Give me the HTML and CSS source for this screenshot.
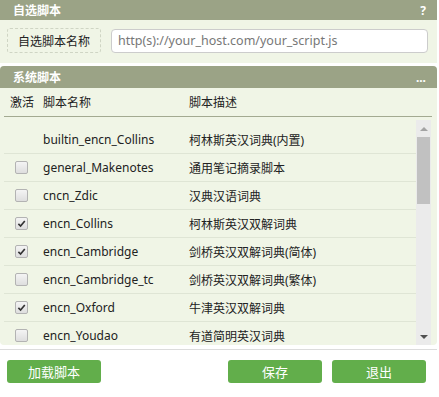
FILE: index.html
```html
<!DOCTYPE html>
<html lang="zh-CN">
<head>
<meta charset="UTF-8" />
<title>脚本管理</title>
<link rel="stylesheet" href="styles.css">
</head>
<body>

<div class="panel">
  <div class="panel-head">
    <span>自选脚本</span>
    <span class="head-tool">?</span>
  </div>
  <div class="custom-row">
    <span class="name-btn">自选脚本名称</span>
    <input class="url-input" type="text" placeholder="http(s)://your_host.com/your_script.js" />
  </div>
</div>

<div class="panel panel-sys">
  <div class="panel-head">
    <span>系统脚本</span>
    <span class="head-tool">...</span>
  </div>
  <div class="thead">
    <span class="c-check">激活</span>
    <span class="c-name">脚本名称</span>
    <span class="c-desc">脚本描述</span>
  </div>
  <div class="tbody">
    <div class="list">
      <div class="row">
        <span class="c-check"></span>
        <span class="c-name">builtin_encn_Collins</span>
        <span class="c-desc">柯林斯英汉词典(内置)</span>
      </div>
      <div class="row">
        <span class="c-check"><span class="box"></span></span>
        <span class="c-name">general_Makenotes</span>
        <span class="c-desc">通用笔记摘录脚本</span>
      </div>
      <div class="row">
        <span class="c-check"><span class="box"></span></span>
        <span class="c-name">cncn_Zdic</span>
        <span class="c-desc">汉典汉语词典</span>
      </div>
      <div class="row">
        <span class="c-check"><span class="box"><svg viewBox="0 0 12 12"><path d="M2.6 6.4 L5 8.8 L9.6 3.2" /></svg></span></span>
        <span class="c-name">encn_Collins</span>
        <span class="c-desc">柯林斯英汉双解词典</span>
      </div>
      <div class="row">
        <span class="c-check"><span class="box"><svg viewBox="0 0 12 12"><path d="M2.6 6.4 L5 8.8 L9.6 3.2" /></svg></span></span>
        <span class="c-name">encn_Cambridge</span>
        <span class="c-desc">剑桥英汉双解词典(简体)</span>
      </div>
      <div class="row">
        <span class="c-check"><span class="box"></span></span>
        <span class="c-name">encn_Cambridge_tc</span>
        <span class="c-desc">剑桥英汉双解词典(繁体)</span>
      </div>
      <div class="row">
        <span class="c-check"><span class="box"><svg viewBox="0 0 12 12"><path d="M2.6 6.4 L5 8.8 L9.6 3.2" /></svg></span></span>
        <span class="c-name">encn_Oxford</span>
        <span class="c-desc">牛津英汉双解词典</span>
      </div>
      <div class="row">
        <span class="c-check"><span class="box"></span></span>
        <span class="c-name">encn_Youdao</span>
        <span class="c-desc">有道简明英汉词典</span>
      </div>
    </div>
    <div class="scrollbar">
      <span class="arrow arrow-up"></span>
      <span class="thumb"></span>
      <span class="track"></span>
      <span class="arrow arrow-down"></span>
    </div>
  </div>
</div>

<div class="actions">
  <button class="btn">加载脚本</button>
  <div class="actions-right">
    <button class="btn">保存</button>
    <button class="btn">退出</button>
  </div>
</div>

</body>
</html>
```

FILE: styles.css
```css
body {
  margin: 0;
  width: 437px;
  font-family: "Noto Sans", "Noto Sans CJK SC", sans-serif;
  font-size: 12px;
  color: #222;
  background: #fff;
}
.panel {
  background: #f0f5e6;
}
.panel-sys {
  margin-top: 3px;
  border-radius: 4px;
}
.panel-head {
  display: flex;
  justify-content: space-between;
  align-items: center;
  height: 20px;
  padding: 0 11px 0 13px;
  background: #9ba386;
  color: #fff;
  font-weight: bold;
}
.panel-sys .panel-head {
  height: 22px;
  border-radius: 4px 4px 0 0;
}
.head-tool {
  font-weight: bold;
}
.custom-row {
  display: flex;
  align-items: center;
  gap: 10px;
  padding: 8px 9px 10px 7px;
}
.name-btn {
  display: flex;
  align-items: center;
  justify-content: center;
  width: 92px;
  height: 23px;
  border: 1px dashed #cfd5c4;
  border-radius: 3px;
  font-size: 12px;
  color: #222;
}
.url-input {
  flex: 1;
  box-sizing: border-box;
  height: 24px;
  padding: 0 6px;
  border: 1px solid #ccc;
  border-radius: 4px;
  background: #fff;
  font-family: inherit;
  font-size: 12.5px;
}
.url-input::placeholder {
  color: #777;
}
.thead {
  display: flex;
  align-items: center;
  height: 28px;
  margin: 0 5px 0 4px;
  border-bottom: 1px solid #a3aa91;
}
.c-check {
  width: 39px;
  flex: none;
}
.thead .c-check {
  padding-left: 6px;
  width: 33px;
}
.c-name {
  width: 146px;
  flex: none;
}
.c-desc {
  flex: 1;
}
.tbody {
  display: flex;
  height: 225px;
  margin: 3px 6px 0 4px;
}
.list {
  flex: 1;
  overflow: hidden;
  padding-top: 6px;
}
.row {
  display: flex;
  align-items: center;
  height: 27px;
  border-bottom: 1px solid #dfe5d5;
}
.row .c-check {
  display: flex;
  padding-left: 11px;
  width: 28px;
}
.box {
  display: inline-block;
  width: 11px;
  height: 11px;
  border: 1px solid #b3b3b3;
  border-radius: 2px;
  background: linear-gradient(#f4f4f4, #dedede);
}
.box svg {
  display: block;
  width: 11px;
  height: 11px;
  fill: none;
  stroke: #333;
  stroke-width: 1.8;
}
.scrollbar {
  display: flex;
  flex-direction: column;
  width: 15px;
  background: #ebebeb;
}
.arrow {
  height: 17px;
  display: flex;
  align-items: center;
  justify-content: center;
}
.arrow::before {
  content: "";
  border-left: 4px solid transparent;
  border-right: 4px solid transparent;
}
.arrow-up::before {
  border-bottom: 4px solid #a3a3a3;
}
.arrow-down::before {
  border-top: 4px solid #505050;
}
.thumb {
  height: 67px;
  margin: 0 1px;
  background: #c1c1c1;
}
.track {
  flex: 1;
}
.actions {
  display: flex;
  justify-content: space-between;
  margin-top: 4px;
  padding: 10px 11px 0 7px;
  border-top: 1px solid #dcdcdc;
}
.actions-right {
  display: flex;
  gap: 10px;
}
.btn {
  width: 94px;
  height: 23px;
  border: none;
  border-radius: 3px;
  background: #62ae4b;
  color: #fff;
  font-family: inherit;
  font-size: 13px;
  cursor: pointer;
}
```
